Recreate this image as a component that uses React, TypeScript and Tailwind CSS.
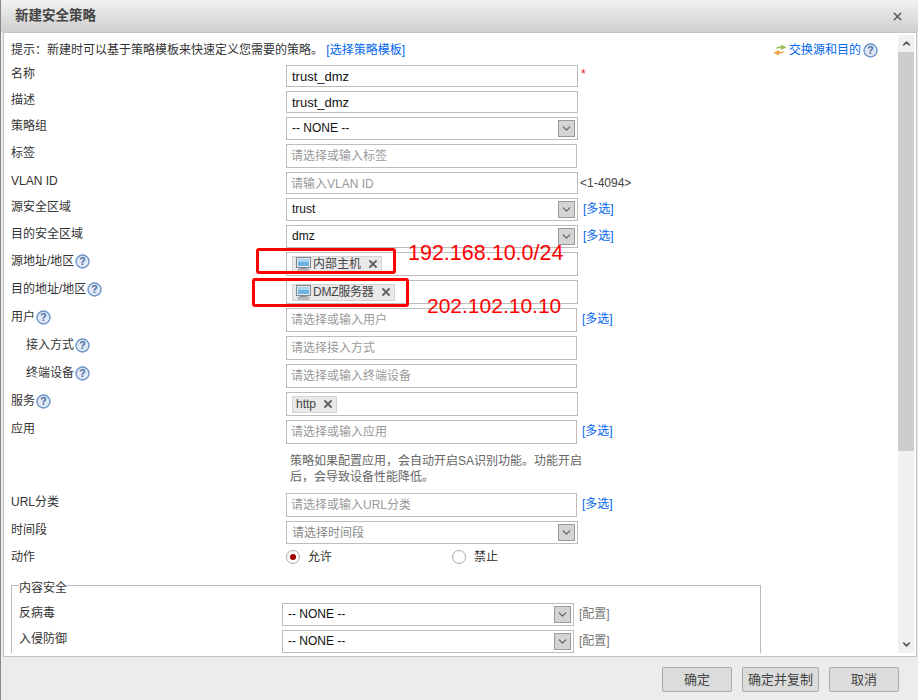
import React from 'react';
import { X, ChevronDown, ChevronUp } from 'lucide-react';

const font = 'font-["Liberation_Sans","Noto_Sans_CJK_SC",sans-serif]';

const HelpIcon = () => (
  <svg width="15" height="15" viewBox="0 0 15 15" className="shrink-0">
    <circle cx="7.5" cy="7.5" r="6.5" fill="#dfe8f5" stroke="#6f94c8" strokeWidth="1.4" />
    <text x="7.5" y="11.2" textAnchor="middle" fontSize="10.5" fontWeight="700" fill="#4a6a9c" fontFamily="Liberation Sans">?</text>
  </svg>
);

const MonitorIcon = () => (
  <svg width="15" height="15" viewBox="0 0 15 15" className="shrink-0">
    <rect x="0.5" y="0.5" width="14" height="10" fill="#e4e8ec" stroke="#7d8790" />
    <rect x="2" y="2" width="11" height="7" fill="#6fb1e0" />
    <rect x="2" y="2" width="11" height="3" fill="#a6d3ef" />
    <rect x="4" y="11" width="7" height="1" fill="#8c949b" />
    <rect x="2" y="12" width="11" height="2.5" fill="#b9bfc4" stroke="#8c949b" strokeWidth="0.5" />
  </svg>
);

const SwapIcon = () => (
  <svg width="14" height="12" viewBox="0 0 14 12" className="shrink-0">
    <path d="M3 5 C3 3 5 2.6 8 2.6 V0.5 L13.5 3.2 L8 6 V4.2 C6 4.2 4.5 4.2 3 5Z" fill="#9dbb5a" />
    <path d="M11 7 C11 9 9 9.4 6 9.4 V11.5 L0.5 8.8 L6 6 V7.8 C8 7.8 9.5 7.8 11 7Z" fill="#efa33a" />
  </svg>
);

const Label = ({ text, help, indent }: { text: string; help?: boolean; indent?: boolean }) => (
  <div className={`flex w-[275px] shrink-0 items-center gap-[1px] h-[18px] text-[12px] leading-4 text-[#333] ${indent ? 'pl-[15px]' : ''}`}>
    {text}
    {help && <HelpIcon />}
  </div>
);

const TextBox = ({ value, placeholder, height, wide }: { value?: string; placeholder?: string; height: string; wide?: boolean }) => (
  <div className={`${height} ${wide ? 'w-[292px] pt-[1px]' : 'w-[291px]'} shrink-0 flex items-center border border-[#bdbdbd] bg-white ${value ? 'px-[5px] text-[13px] text-[#111]' : 'px-[4px] text-[12px] text-[#999]'}`}>
    {value || placeholder}
  </div>
);

const SelectBox = ({ value, placeholder }: { value?: string; placeholder?: string }) => (
  <div className={`h-[23px] w-[292px] shrink-0 flex items-center justify-between border border-[#bdbdbd] bg-white pl-[5px] pr-[2px] text-[12px] ${value ? 'text-[#111]' : 'text-[#888]'}`}>
    <span className={value ? 'pb-[2px]' : ''}>{value || placeholder}</span>
    <span className="flex h-[17px] w-[17px] items-center justify-center border border-[#9a9a9a] bg-[#d4d4d4]">
      <ChevronDown size={13} strokeWidth={2.5} className="text-[#666]" />
    </span>
  </div>
);

const Tag = ({ text, icon, narrow }: { text: string; icon?: boolean; narrow?: boolean }) => (
  <span className="flex h-[17px] items-center border border-[#d4d4d4] bg-[#e9e9e9] pl-[3px] pr-[2px] text-[12px] text-[#444]">
    {icon && <MonitorIcon />}
    <span className={`${icon ? 'ml-[2px]' : ''} ${narrow ? 'tracking-[-0.25px]' : ''}`}>{text}</span>
    <X size={12} strokeWidth={4} className="ml-[6px] text-[#666]" />
  </span>
);

const TagBox = ({ children }: { children: React.ReactNode }) => (
  <div className="flex h-[24px] w-[292px] shrink-0 items-center border border-[#bdbdbd] bg-white pl-[5px]">
    {children}
  </div>
);

const Multi = () => <a className="ml-[5px] self-center pb-[2px] text-[12px] text-[#0066ee]">[多选]</a>;

const Row = ({ children }: { children: React.ReactNode }) => <div className="flex items-start">{children}</div>;

const Button = ({ text, width }: { text: string; width: string }) => (
  <button className={`h-[25px] ${width} rounded-[2px] border border-[#aaa] bg-[#dcdcdc] text-[13px] text-[#444]`}>{text}</button>
);

export default function App() {
  return (
    <div className={`${font} relative flex h-[700px] w-[918px] flex-col overflow-hidden border-l border-l-[#8a8a8a] bg-[#ececec]`}>
      <div className="flex h-[32px] shrink-0 items-center justify-between bg-gradient-to-b from-[#f2f2f2] to-[#cfcfcf] pl-[14px] pr-[14px]">
        <span className="pt-[1px] text-[13.5px] font-bold text-[#444]">新建安全策略</span>
        <X size={13} strokeWidth={2.5} className="text-[#555]" />
      </div>

      <div className="ml-[2px] mr-[1px] flex h-[625px] shrink-0 border border-[#c4c4c4] bg-white pb-[3px] pt-[2px] pr-[2px]">
        <div className="flex-1 overflow-hidden pl-[7px] pt-[4px]">
          <div className="flex flex-col gap-[4px]">
            <div className="flex h-[22px] items-center justify-between pr-[20px] text-[12px] text-[#333]">
              <span>
                提示：新建时可以基于策略模板来快速定义您需要的策略。 <a className="text-[#0066ee]">[选择策略模板]</a>
              </span>
              <span className="flex items-center gap-[2px] text-[#0066ee]">
                <SwapIcon />
                交换源和目的
                <HelpIcon />
              </span>
            </div>

            <Row>
              <Label text="名称" />
              <TextBox value="trust_dmz" height="h-[22px]" wide />
              <span className="ml-[3px] text-[12px] text-[#e8112d]">*</span>
            </Row>
            <Row>
              <Label text="描述" />
              <TextBox value="trust_dmz" height="h-[22px]" wide />
            </Row>
            <Row>
              <Label text="策略组" />
              <SelectBox value="-- NONE --" />
            </Row>
            <Row>
              <Label text="标签" />
              <TextBox placeholder="请选择或输入标签" height="h-[24px]" />
            </Row>
            <Row>
              <Label text="VLAN ID" />
              <TextBox placeholder="请输入VLAN ID" height="h-[22px]" wide />
              <span className="ml-[2px] self-center text-[12px] text-[#444]">&lt;1-4094&gt;</span>
            </Row>
            <Row>
              <Label text="源安全区域" />
              <SelectBox value="trust" />
              <Multi />
            </Row>
            <Row>
              <Label text="目的安全区域" />
              <SelectBox value="dmz" />
              <Multi />
            </Row>
            <Row>
              <Label text="源地址/地区" help />
              <TagBox>
                <Tag text="内部主机" icon />
              </TagBox>
            </Row>
            <Row>
              <Label text="目的地址/地区" help />
              <TagBox>
                <Tag text="DMZ服务器" icon narrow />
              </TagBox>
            </Row>
            <Row>
              <Label text="用户" help />
              <TextBox placeholder="请选择或输入用户" height="h-[24px]" />
              <Multi />
            </Row>
            <Row>
              <Label text="接入方式" help indent />
              <TextBox placeholder="请选择接入方式" height="h-[24px]" />
            </Row>
            <Row>
              <Label text="终端设备" help indent />
              <TextBox placeholder="请选择或输入终端设备" height="h-[24px]" />
            </Row>
            <Row>
              <Label text="服务" help />
              <TagBox>
                <Tag text="http" />
              </TagBox>
            </Row>
            <Row>
              <Label text="应用" />
              <TextBox placeholder="请选择或输入应用" height="h-[24px]" />
              <Multi />
            </Row>
            <div className="flex h-[41px] items-start pl-[279px] pt-[5px]">
              <p className="w-[296px] text-[12px] leading-[16px] text-[#666]">
                策略如果配置应用，会自动开启SA识别功能。功能开启后，会导致设备性能降低。
              </p>
            </div>
            <Row>
              <Label text="URL分类" />
              <TextBox placeholder="请选择或输入URL分类" height="h-[24px]" />
              <Multi />
            </Row>
            <Row>
              <Label text="时间段" />
              <SelectBox placeholder="请选择时间段" />
            </Row>
            <div className="flex h-[18px] items-center">
              <Label text="动作" />
              <span className="flex w-[166px] items-center text-[12px] text-[#333]">
                <span className="flex h-[14px] w-[14px] items-center justify-center rounded-full border border-[#aaa] bg-white">
                  <span className="h-[6px] w-[6px] rounded-full bg-[#a00000]" />
                </span>
                <span className="ml-[8px]">允许</span>
              </span>
              <span className="flex items-center text-[12px] text-[#333]">
                <span className="h-[14px] w-[14px] rounded-full border border-[#aaa] bg-white" />
                <span className="ml-[8px]">禁止</span>
              </span>
            </div>

            <fieldset className="mt-[8px] h-[120px] w-[750px] border border-[#b9b9c2] pl-[7px] pt-[11px]">
              <legend className="relative top-[3px] text-[12px] leading-[14px] text-[#333]">内容安全</legend>
              <div className="flex flex-col gap-[4px]">
                <div className="flex items-start">
                  <div className="h-[18px] w-[263px] shrink-0 pt-[2px] text-[12px] leading-4 text-[#333]">反病毒</div>
                  <SelectBox value="-- NONE --" />
                  <span className="ml-[5px] self-center pb-[2px] text-[12px] text-[#777]">[配置]</span>
                </div>
                <div className="flex items-start">
                  <div className="h-[18px] w-[263px] shrink-0 pt-[1px] text-[12px] leading-4 text-[#333]">入侵防御</div>
                  <SelectBox value="-- NONE --" />
                  <span className="ml-[5px] self-center pb-[2px] text-[12px] text-[#777]">[配置]</span>
                </div>
              </div>
            </fieldset>
          </div>
        </div>

        <div className="flex w-[16px] shrink-0 flex-col bg-[#f0f0f0]">
          <div className="flex h-[17px] items-center justify-center">
            <ChevronUp size={11} strokeWidth={3.5} className="text-[#555]" />
          </div>
          <div className="h-[399px] bg-[#cdcdcd]" />
          <div className="flex-1" />
          <div className="flex h-[17px] items-center justify-center">
            <ChevronDown size={11} strokeWidth={3.5} className="text-[#555]" />
          </div>
        </div>
      </div>

      <div className="flex flex-1 items-start justify-end gap-[10px] pr-[19px] pt-[10px]">
        <Button text="确定" width="w-[70px]" />
        <Button text="确定并复制" width="w-[77px]" />
        <Button text="取消" width="w-[70px]" />
      </div>

      {/* 截图上的红色标注 */}
      <div className="absolute left-[255px] top-[248px] h-[26px] w-[140px] rounded-[3px] border-[3px] border-[#fe0000]" />
      <div className="absolute left-[251px] top-[278px] h-[29px] w-[157px] rounded-[3px] border-[3px] border-[#fe0000]" />
      <span className="absolute left-[407px] top-[242px] text-[21.5px] leading-[22px] text-[#fe0000]">192.168.10.0/24</span>
      <span className="absolute left-[426px] top-[295px] text-[21px] leading-[22px] text-[#fe0000]">202.102.10.10</span>
    </div>
  );
}
